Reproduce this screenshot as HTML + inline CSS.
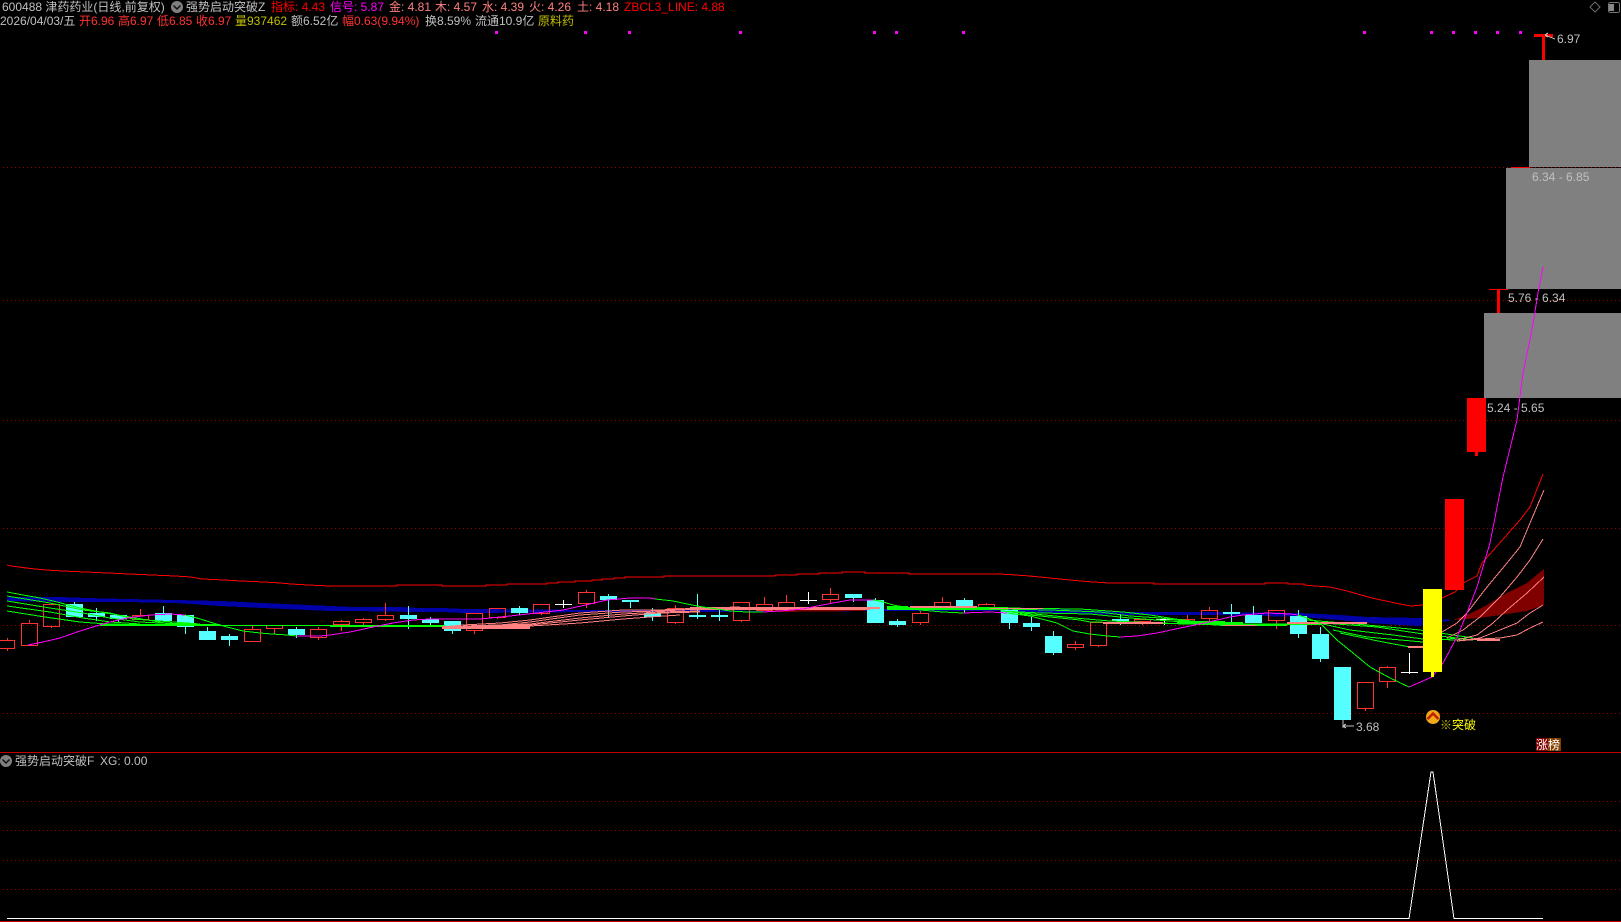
<!DOCTYPE html>
<html><head><meta charset="utf-8"><style>
html,body{margin:0;padding:0;background:#000;width:1621px;height:922px;overflow:hidden}
#a{position:relative;width:1621px;height:922px;overflow:hidden;background:#000;font:12px/14px "Liberation Sans","WenQuanYi Zen Hei","Noto Sans CJK SC",sans-serif;color:#c0c0c0}
#a span{position:absolute;white-space:pre}
svg{position:absolute;left:0;top:0}
.r{color:#ff3232}.m{color:#ff00ff}.p{color:#ff8080}.y{color:#c0c000}.f{color:#ff0000}
</style></head><body><div id="a">
<svg width="1621" height="922" viewBox="0 0 1621 922" shape-rendering="crispEdges" fill="none">
<g fill="#808080"><rect x="1529" y="60" width="92" height="107"/><rect x="1506" y="168" width="115" height="121"/><rect x="1484" y="313" width="137" height="85"/></g>
<g stroke="#a00000" stroke-dasharray="1 3"><path d="M3 167.500H1621M3 300.500H1621M3 420.500H1621M3 528.500H1621M3 625.500H1621M3 713.500H1621M3 801.500H1621M3 830.500H1621M3 860.500H1621M3 889.500H1621"/></g>
<path stroke="#c00000" stroke-width="1" d="M0 752.500H1621M0 921.500H1621"/>
<g fill="#ff00ff"><rect x="495" y="31" width="3" height="3"/><rect x="584" y="31" width="3" height="3"/><rect x="628" y="31" width="3" height="3"/><rect x="739" y="31" width="3" height="3"/><rect x="873" y="31" width="3" height="3"/><rect x="895" y="31" width="3" height="3"/><rect x="962" y="31" width="3" height="3"/><rect x="1363" y="31" width="3" height="3"/><rect x="1430" y="31" width="3" height="3"/><rect x="1452" y="31" width="3" height="3"/><rect x="1474" y="31" width="3" height="3"/><rect x="1496" y="31" width="3" height="3"/><rect x="1519" y="31" width="3" height="3"/></g>
<polygon fill="#0000a8" points="7,597 60,597 87,598 127,599 175,600 220,601 263,603 330,606 353,607 397,607 420,608 442,608 465,609 600,610 700,610 760,611 880,609 930,609 990,607 1030,608 1123,612 1220,612 1300,613 1340,615 1367,617 1420,618 1453,620 1420,626 1367,623 1340,620 1300,617 1220,615 1123,615 1030,612 990,611 930,611 880,611 760,612 600,612 465,613 442,612 420,612 353,611 330,611 263,608 220,606 175,603 127,602 87,602 60,602 7,601"/>
<polygon fill="#800000" points="775,609 865,608 865,611 775,612"/>
<polygon fill="#800000" points="1453,620 1467,615 1487,605 1507,593 1527,583 1544,569 1544,605 1527,611 1507,614 1487,617 1467,619"/>
<g fill="#55ffff">
<rect x="66" y="604" width="17" height="13"/><rect x="88" y="613" width="17" height="4"/><rect x="110" y="615" width="17" height="4"/><rect x="155" y="613" width="17" height="8"/><rect x="177" y="615" width="17" height="12"/><rect x="199" y="631" width="17" height="9"/><rect x="221" y="636" width="17" height="4"/><rect x="288" y="629" width="17" height="6"/><rect x="400" y="615" width="17" height="4"/><rect x="422" y="619" width="17" height="4"/><rect x="444" y="621" width="17" height="10"/><rect x="511" y="608" width="17" height="5"/><rect x="600" y="596" width="17" height="4"/><rect x="622" y="600" width="17" height="2"/><rect x="644" y="613" width="17" height="4"/><rect x="689" y="615" width="17" height="2"/><rect x="711" y="615" width="17" height="2"/><rect x="845" y="594" width="17" height="4"/><rect x="867" y="600" width="17" height="23"/><rect x="889" y="621" width="17" height="4"/><rect x="956" y="600" width="17" height="10"/><rect x="1001" y="610" width="17" height="13"/><rect x="1023" y="623" width="17" height="4"/><rect x="1045" y="636" width="17" height="17"/><rect x="1112" y="619" width="17" height="2"/><rect x="1223" y="612" width="17" height="2"/><rect x="1245" y="615" width="17" height="8"/><rect x="1290" y="616" width="17" height="18"/><rect x="1312" y="634" width="17" height="25"/><rect x="1334" y="667" width="17" height="53"/>
</g>
<path stroke="#55ffff" d="M74.500 602V617M96.500 608V621M118.500 615V623M163.500 606V621M185.500 627V634M207.500 627V640M229.500 634V646M296.500 627V638M408.500 606V629M430.500 617V627M452.500 631V634M519.500 606V615M608.500 594V617M630.500 602V608M652.500 608V621M697.500 594V619M719.500 610V621M853.500 598V602M875.500 598V600M897.500 619V627M964.500 598V613M1009.500 611V629M1031.500 616V631M1053.500 631V655M1120.500 614V625M1231.500 604V622M1253.500 606V615M1298.500 610V638M1320.500 627V662"/>
<g stroke="#ff3232">
<rect x="-1.500" y="640.500" width="16" height="8"/><rect x="21.500" y="623.500" width="16" height="22"/><rect x="43.500" y="604.500" width="16" height="22"/><rect x="132.500" y="615.500" width="16" height="4"/><rect x="244.500" y="629.500" width="16" height="12"/><rect x="266.500" y="625.500" width="16" height="3"/><rect x="310.500" y="629.500" width="16" height="8"/><rect x="333.500" y="621.500" width="16" height="3"/><rect x="355.500" y="619.500" width="16" height="3"/><rect x="377.500" y="615.500" width="16" height="4"/><rect x="466.500" y="613.500" width="16" height="17"/><rect x="489.500" y="608.500" width="16" height="9"/><rect x="533.500" y="604.500" width="16" height="9"/><rect x="578.500" y="592.500" width="16" height="11"/><rect x="667.500" y="608.500" width="16" height="14"/><rect x="733.500" y="602.500" width="16" height="18"/><rect x="756.500" y="604.500" width="16" height="6"/><rect x="778.500" y="602.500" width="16" height="6"/><rect x="822.500" y="594.500" width="16" height="5"/><rect x="912.500" y="613.500" width="16" height="9"/><rect x="934.500" y="602.500" width="16" height="7"/><rect x="978.500" y="604.500" width="16" height="4"/><rect x="1067.500" y="644.500" width="16" height="3"/><rect x="1090.500" y="622.500" width="16" height="23"/><rect x="1134.500" y="619.500" width="16" height="2"/><rect x="1178.500" y="619.500" width="16" height="4"/><rect x="1201.500" y="610.500" width="16" height="8"/><rect x="1268.500" y="610.500" width="16" height="10"/><rect x="1357.500" y="682.500" width="16" height="26"/><rect x="1379.500" y="667.500" width="16" height="14"/>
<path d="M7.500 638V640M7.500 649V651M29.500 620V623M51.500 627V628M140.500 609V615M252.500 625V629M274.500 629V634M318.500 627V629M318.500 638V640M341.500 620V621M341.500 625V631M363.500 618V619M363.500 623V625M385.500 603V615M385.500 620V621M474.500 631V634M497.500 618V619M541.500 614V615M586.500 590V592M586.500 604V608M675.500 605V608M675.500 623V624M741.500 621V622M764.500 597V604M786.500 595V602M830.500 588V594M830.500 600V603M920.500 611V613M920.500 623V625M942.500 597V602M986.500 603V604M1075.500 641V644M1075.500 648V650M1098.500 646V647M1142.500 622V625M1187.500 615V619M1209.500 607V610M1209.500 619V622M1276.500 621V629M1365.500 709V711M1387.500 666V667M1387.500 682V688"/>
</g>
<path stroke="#fff" d="M555 604.500H572M563.500 600V608M800 600.500H817M808.500 592V604M1156 619.500H1172M1164.500 617V625M1401 672.500H1418M1409.500 653V674"/>
<g stroke="#ff0000">
<polyline points="7,565 11,566 19,567 26,568 35,569 46,570 63,571 86,572 108,573 130,574 152,575 175,576 191,577 202,579 224,580 241,581 264,582 280,583 291,584 308,585 330,586 397,586 397,585 442,585 442,586 486,586 486,585 507,585 507,584 547,584 547,583 558,583 558,582 575,582 575,581 592,581 592,580 602,580 602,579 614,579 614,578 625,578 625,577 664,577 664,576 775,576 775,575 797,575 797,574 819,574 819,573 842,573 842,572 865,572 865,573 909,573 909,574 1000,574 1030,576 1050,578 1070,580 1081,581 1093,582 1110,583 1154,583 1154,584 1265,584 1265,583 1288,583 1288,584 1304,584 1304,585 1315,586 1330,587 1347,591 1372,598 1400,604 1411,606 1422,605 1442,598 1455,592 1465,582 1477,576 1482,563 1520,520 1530,507 1543,474"/>
</g>
<g stroke="#00ff00">
<polyline points="7,592 23,595 40,598 57,602 80,608 100,612 130,617 165,623 220,625"/>
<polyline points="7,596 50,603 83,610 110,613 133,619 200,624"/>
<polyline points="7,601 50,608 83,613 110,618 140,622 200,625"/>
<polyline points="7,606 50,612 83,618 110,622 140,624"/>
<polyline points="7,611 45,617 80,622 107,624 160,625"/>
<polyline points="1000,608 1080,609 1123,612 1150,615 1175,619 1200,622"/>
<polyline points="1000,609 1050,610 1100,612 1130,616 1160,618 1200,623"/>
<polyline points="1000,611 1040,613 1090,614 1130,618 1170,621 1210,624"/>
<polyline points="1010,612 1045,615 1075,618 1110,621 1160,623 1220,625"/>
<polyline points="1020,614 1050,617 1080,620 1090,622 1190,624 1300,624"/>
<polyline points="1307,620 1367,625 1420,630 1473,638"/>
<polyline points="1323,623 1377,627 1423,634 1473,640"/>
<polyline points="1323,624 1350,630 1393,635 1423,639 1457,640"/>
<polyline points="1333,630 1367,637 1423,642 1457,638"/>
<polyline points="1340,633 1383,642 1410,647"/>
</g>
<g fill="#00ff00"><rect x="100" y="624" width="120" height="2"/><rect x="220" y="625" width="210" height="1"/><rect x="330" y="625" width="45" height="2"/><rect x="375" y="625" width="70" height="2"/><rect x="887" y="606" width="21" height="4"/><rect x="908" y="607" width="100" height="3"/><rect x="1177" y="621" width="48" height="3"/><rect x="1200" y="622" width="43" height="3"/><rect x="1220" y="624" width="67" height="2"/><rect x="1287" y="623" width="35" height="2"/></g>
<g stroke="#ff8080">
<polyline points="442,627 463,625 500,623 530,620 580,613 623,610 660,610 700,608 740,607"/>
<polyline points="442,628 500,625 530,622 580,615 623,612 660,611 700,609"/>
<polyline points="463,626 530,624 580,618 623,614 660,612 700,611"/>
<polyline points="463,627 530,625 580,620 623,616 660,613 700,612"/>
<polyline points="463,628 530,626 580,623 623,619 650,617 680,615"/>
<polyline points="1432,638 1457,623 1467,613 1487,587 1507,563 1520,547 1530,523 1544,490"/>
<polyline points="1447,638 1463,630 1480,617 1500,597 1517,577 1530,560 1543,539"/>
<polyline points="1457,640 1477,635 1493,623 1507,610 1527,593 1544,577"/>
<polyline points="1457,641 1480,638 1500,630 1517,623 1530,613 1543,605"/>
<polyline points="1457,641 1480,639 1500,638 1517,635 1530,628 1543,622"/>
</g>
<g fill="#ff8080"><rect x="442" y="626" width="88" height="3"/><rect x="690" y="607" width="180" height="3"/><rect x="870" y="607" width="10" height="2"/><rect x="910" y="606" width="67" height="2"/><rect x="990" y="608" width="53" height="1"/><rect x="1103" y="622" width="60" height="2"/><rect x="1223" y="625" width="34" height="1"/><rect x="1287" y="622" width="80" height="2"/><rect x="1408" y="646" width="15" height="2"/><rect x="1477" y="639" width="23" height="2"/></g>
<g stroke="#ff00ff">
<polyline points="28,645 43,642 60,638 77,632 93,627 110,622 127,618 150,615 170,614 185,615"/>
<polyline points="297,636 320,636 330,635 350,632 373,627 393,623 413,620 430,619 480,619 490,618 510,616 537,613 563,610 590,604 607,600 630,598 650,598 655,599"/>
<polyline points="763,612 780,611 803,609 817,606 833,603 850,600 873,600"/>
<polyline points="963,613 990,612 1007,613"/>
<polyline points="1120,637 1137,636 1157,633 1180,628 1200,624 1213,621 1230,617 1243,615 1267,613 1290,614 1298,615"/>
<polyline points="1409,687 1432,677 1443,663 1457,637 1467,613 1477,587 1490,543 1503,477 1517,420 1523,373 1532,330 1538,293 1543,267"/>
</g>
<g stroke="#00ff00">
<polyline points="185,615 197,618 213,623 227,627 243,631 260,633 272,634 287,635 297,636"/>
<polyline points="655,599 673,601 687,604 703,607 717,609 730,611 747,612 763,612"/>
<polyline points="873,600 880,601 893,605 920,610 943,612 963,613"/>
<polyline points="1007,613 1030,616 1057,623 1073,631 1090,634 1107,636 1120,637"/>
<polyline points="1298,615 1307,618 1320,623 1337,640 1353,653 1370,667 1390,678 1409,687"/>
</g>
<rect x="1423" y="589" width="19" height="83" fill="#ffff00"/><rect x="1431" y="672" width="3" height="5" fill="#ffff00"/>
<rect x="1445" y="499" width="19" height="91" fill="#ff0000"/>
<rect x="1467" y="398" width="19" height="54" fill="#ff0000"/><rect x="1475" y="452" width="3" height="4" fill="#ff0000"/>
<rect x="1489" y="289" width="19" height="1" fill="#ff0000"/><rect x="1497" y="289" width="3" height="24" fill="#ff0000"/>
<rect x="1511" y="167" width="19" height="1" fill="#ff0000"/>
<rect x="1534" y="34" width="19" height="3" fill="#ff0000"/><rect x="1542" y="37" width="3" height="23" fill="#ff0000"/>
<polyline stroke="#fff" points="7,918.500 1409,918.500 1431,772 1433,772 1454,918.500 1543,918.500"/>
<path stroke="#c0c0c0" d="M1545 35L1555 39M1545 35L1548 33M1545 35L1548 37M1343 720V728M1343 726H1354M1343 726L1346 724M1343 726L1346 728"/>
<path stroke="#666" d="M1595 2L1600 7L1595 12L1590 7Z"/>
<rect x="1608.500" y="2.500" width="11" height="10" rx="2" stroke="#777"/><rect x="1609" y="4" width="5" height="7" fill="#888"/>
<circle cx="177" cy="7" r="6" fill="#808080" shape-rendering="auto"/><path d="M173.500 5.500L177 9L180.500 5.500" stroke="#111" stroke-width="1.500" shape-rendering="auto"/>
<circle cx="6" cy="761" r="6" fill="#808080" shape-rendering="auto"/><path d="M2.500 759.500L6 763L9.500 759.500" stroke="#111" stroke-width="1.500" shape-rendering="auto"/>
<circle cx="1433" cy="717" r="7" fill="#f0a818" shape-rendering="auto"/><path d="M1427.500 719L1433 713.500L1438.500 719" stroke="#c02000" stroke-width="2.500" shape-rendering="auto"/>
<rect x="1536" y="738" width="12" height="13" fill="#800000"/><rect x="1548" y="738" width="13" height="13" fill="#804000"/>
</svg>
<span style="left:2px;top:0">600488 津药药业(日线,前复权)</span>
<span style="left:186px;top:0">强势启动突破Z</span>
<span class="f" style="left:271px;top:0">指标: 4.43</span>
<span class="m" style="left:330px;top:0">信号: 5.87</span>
<span class="p" style="left:389px;top:0">金: 4.81</span>
<span class="p" style="left:435px;top:0">木: 4.57</span>
<span class="p" style="left:482px;top:0">水: 4.39</span>
<span class="p" style="left:529px;top:0">火: 4.26</span>
<span class="p" style="left:577px;top:0">土: 4.18</span>
<span class="f" style="left:624px;top:0">ZBCL3_LINE: 4.88</span>
<span style="left:0;top:14px">2026/04/03/五</span>
<span class="r" style="left:79px;top:14px">开6.96</span>
<span class="r" style="left:118px;top:14px">高6.97</span>
<span class="r" style="left:157px;top:14px">低6.85</span>
<span class="r" style="left:196px;top:14px">收6.97</span>
<span class="y" style="left:235px;top:14px">量937462</span>
<span style="left:291px;top:14px">额6.52亿</span>
<span class="r" style="left:342px;top:14px">幅0.63(9.94%)</span>
<span style="left:425px;top:14px">换8.59%</span>
<span style="left:475px;top:14px">流通10.9亿</span>
<span class="y" style="left:538px;top:14px">原料药</span>
<span style="left:15px;top:754px">强势启动突破F</span>
<span style="left:100px;top:754px">XG: 0.00</span>
<span style="left:1557px;top:32px">6.97</span>
<span style="left:1532px;top:170px">6.34 - 6.85</span>
<span style="left:1508px;top:291px">5.76 - 6.34</span>
<span style="left:1487px;top:401px">5.24 - 5.65</span>
<span style="left:1356px;top:720px">3.68</span>
<span style="left:1440px;top:718px;color:#ffff00"><b style="font-weight:normal;color:#c0c000">※</b>突破</span>
<span style="left:1536px;top:738px;color:#fff">涨榜</span>
</div></body></html>
